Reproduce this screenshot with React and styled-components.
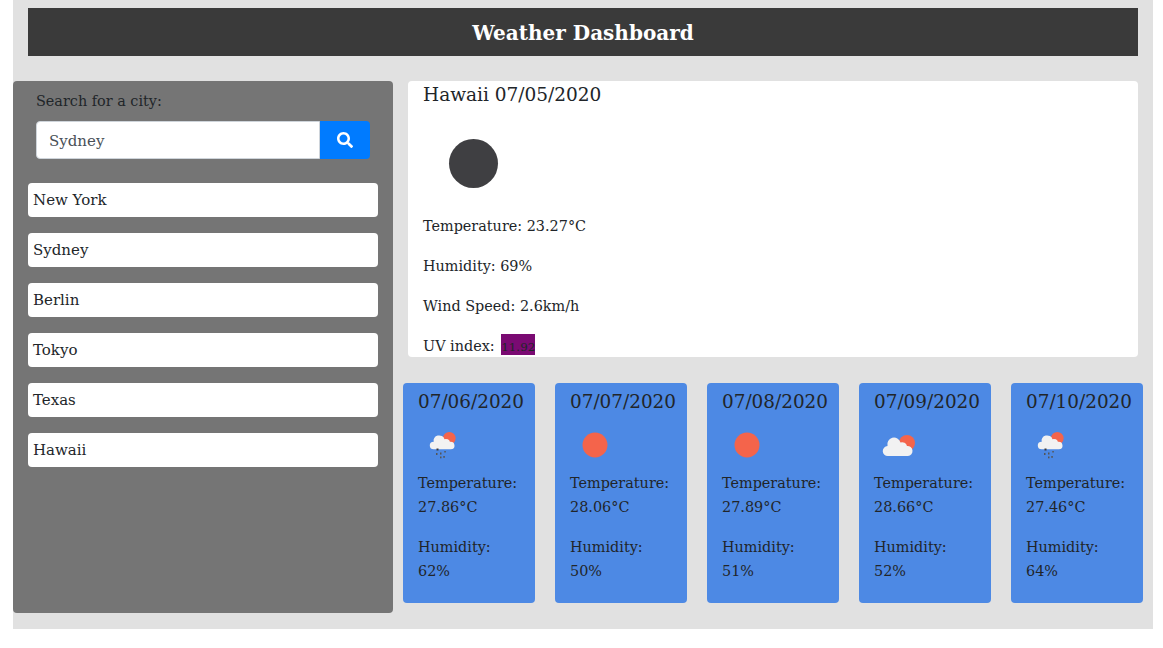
import React from "react";
import styled, { createGlobalStyle } from "styled-components";
import { FaSearch } from "react-icons/fa";

const Global = createGlobalStyle`
  html, body { margin: 0; padding: 0; background: #fff; }
  body { font-family: "DejaVu Serif", "Liberation Serif", serif; color: #212529; font-size: 14.4px; line-height: 24px; }
`;
const Page = styled.div`
  width: 1140px; height: 629px; margin-left: 13px; padding-top: 8px; box-sizing: border-box; background: #e1e1e1;
`;
const Header = styled.header`
  margin: 0 15px; height: 48px; background: #3a3a3a; color: #fff; display: flex; align-items: center; justify-content: center;
  font-size: 20px; font-weight: 700; padding-top: 1px; box-sizing: border-box;
`;
const Row = styled.div`
  display: flex; margin-top: 25px; align-items: flex-start;
`;
const Sidebar = styled.aside`
  width: 380px; height: 532px; flex: none; background: #757575; border-radius: 4px; padding: 8px 15px 0; box-sizing: border-box;
`;
const Label = styled.label`
  display: block; margin: 0 8px 8px; font-size: 14.4px;
`;
const SearchRow = styled.div`
  display: flex; margin: 0 8px 24px; height: 38px;
`;
const SearchInput = styled.input`
  width: 284px; box-sizing: border-box; height: 38px; padding: 2px 12px 0; border: 1px solid #ced4da; border-radius: 4px 0 0 4px;
  font: inherit; font-size: 15px; color: #495057; background: #fff; outline: none;
`;
const SearchButton = styled.button`
  width: 50px; height: 38px; border: 0; padding: 0; background: #007bff; color: #fff; border-radius: 0 4px 4px 0; display: flex; align-items: center; justify-content: center;
`;
const CityList = styled.ul`
  list-style: none; margin: 0; padding: 0; display: flex; flex-direction: column; gap: 16px;
`;
const City = styled.li`
  height: 34px; background: #fff; border-radius: 4px; padding: 0 5px; box-sizing: border-box; display: flex; align-items: center; color: #212529; font-size: 15px;
`;
const Content = styled.main`
  flex: 1; min-width: 0;
`;
const Today = styled.section`
  margin: 0 15px; height: 276px; background: #fff; border-radius: 4px; padding: 1px 15px 0; box-sizing: border-box; overflow: hidden;
`;
const Title = styled.h2`
  margin: 0; font-size: 18.5px; font-weight: 400; line-height: 26px;
`;
const BigIcon = styled.svg`
  display: block; width: 100px; height: 100px; margin: 5px 0 1px;
`;
const Fact = styled.p`
  margin: 0 0 16px; line-height: 24px;
`;
const Uv = styled.span`
  background: #7a0a72; display: inline-block; font-size: 11.9px; line-height: 15px; padding-top: 6px; margin-left: 2px; white-space: nowrap;
`;
const Cards = styled.div`
  display: flex; gap: 20px; margin: 26px 0 0 10px; width: 740px;
`;
const Card = styled.article`
  width: 132px; height: 220px; flex: none; background: #4d89e4; border-radius: 4px; padding: 6px 15px 0; box-sizing: border-box;
`;
const CardDate = styled.h3`
  margin: 0; font-size: 18.4px; font-weight: 400; line-height: 26px; white-space: nowrap;
`;
const SmallIcon = styled.svg`
  display: block; width: 50px; height: 50px; margin: 5px 0 1px;
`;
const CardFact = styled.p`
  margin: 0 0 16px; line-height: 24px;
`;

const CLOUD_COLOR = "#f2f2f2";
const SUN = "#f4644b";

const Cloud = ({ x, y, sx, sy }) => (
  <path
    transform={`translate(${x} ${y}) scale(${sx} ${sy})`}
    fill={CLOUD_COLOR}
    d="M5 19A5 5 0 0 1 4.500 9A6.500 6.500 0 0 1 17.500 5.500A5 5 0 0 1 24 9A5 5 0 0 1 25 19Z"
  />
);

const Rain = () => (
  <g fill="#555">
    <rect x="18.500" y="28.500" width="2" height="2" fill="#3a3a3a" />
    <rect x="18" y="33" width="1.500" height="2" />
    <rect x="22" y="32.500" width="1.500" height="2" />
    <rect x="26.300" y="31" width="1.500" height="1.500" />
    <rect x="22" y="36.500" width="1.500" height="1.800" />
    <rect x="25.300" y="36" width="1.500" height="1.800" />
  </g>
);

const Weather = ({ kind }) => (
  <SmallIcon viewBox="0 0 50 50">
    {kind === "sun" && <circle cx="25" cy="25" r="12.500" fill={SUN} />}
    {kind === "rain" && (
      <>
        <circle cx="31.300" cy="18.300" r="6.300" fill={SUN} />
        <Cloud x={12} y={15} sx={0.83} sy={0.75} />
        <Rain />
      </>
    )}
    {kind === "cloud" && (
      <>
        <circle cx="33" cy="23" r="8" fill={SUN} />
        <Cloud x={9} y={17} sx={1} sy={1} />
      </>
    )}
  </SmallIcon>
);

const forecast = [
  { date: "07/06/2020", kind: "rain", temp: "27.86°C", hum: "62%" },
  { date: "07/07/2020", kind: "sun", temp: "28.06°C", hum: "50%" },
  { date: "07/08/2020", kind: "sun", temp: "27.89°C", hum: "51%" },
  { date: "07/09/2020", kind: "cloud", temp: "28.66°C", hum: "52%" },
  { date: "07/10/2020", kind: "rain", temp: "27.46°C", hum: "64%" },
];
const cities = ["New York", "Sydney", "Berlin", "Tokyo", "Texas", "Hawaii"];

export default function App() {
  return (
    <>
      <Global />
      <Page>
        <Header>Weather Dashboard</Header>
        <Row>
          <Sidebar>
            <Label>Search for a city:</Label>
            <SearchRow>
              <SearchInput defaultValue="Sydney" />
              <SearchButton aria-label="Search"><FaSearch size={16} /></SearchButton>
            </SearchRow>
            <CityList>
              {cities.map((c) => <City key={c}>{c}</City>)}
            </CityList>
          </Sidebar>
          <Content>
            <Today>
              <Title>Hawaii 07/05/2020</Title>
              <BigIcon viewBox="0 0 100 100"><circle cx="50.500" cy="50.500" r="24.500" fill="#3f3f42" /></BigIcon>
              <Fact>Temperature: 23.27°C</Fact>
              <Fact>Humidity: 69%</Fact>
              <Fact>Wind Speed: 2.6km/h</Fact>
              <Fact>UV index: <Uv>11.92</Uv></Fact>
            </Today>
            <Cards>
              {forecast.map((f) => (
                <Card key={f.date}>
                  <CardDate>{f.date}</CardDate>
                  <Weather kind={f.kind} />
                  <CardFact>Temperature: {f.temp}</CardFact>
                  <CardFact>Humidity: {f.hum}</CardFact>
                </Card>
              ))}
            </Cards>
          </Content>
        </Row>
      </Page>
    </>
  );
}
